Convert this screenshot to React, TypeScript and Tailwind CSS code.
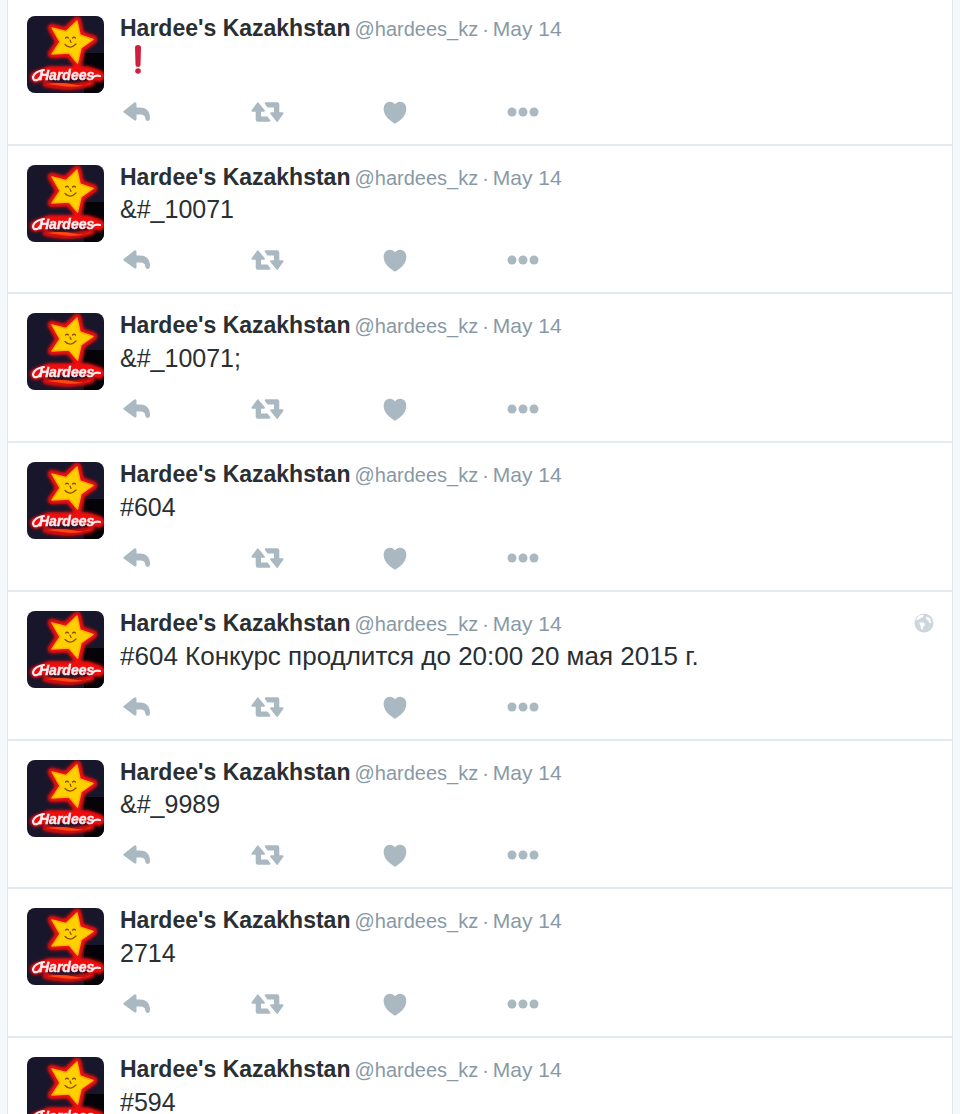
type Tweet = {
  id: number;
  text: string;
  alert?: boolean;
  located?: boolean;
  short?: boolean;
};

const tweets: Tweet[] = [
  { id: 1, text: "", alert: true },
  { id: 2, text: "&#_10071", short: true },
  { id: 3, text: "&#_10071;" },
  { id: 4, text: "#604" },
  { id: 5, text: "#604 Конкурс продлится до 20:00 20 мая 2015 г.", located: true },
  { id: 6, text: "&#_9989", short: true },
  { id: 7, text: "2714" },
  { id: 8, text: "#594" },
];

const STAR =
  "M50 5 L53 19 L66 23.500 L54 32 L50.500 47 L42 37 L25 38 L33 26 L25 12 L39 15.500 Z";

function Avatar({ id }: { id: number }) {
  const glow = `glow-${id}`;
  const soft = `soft-${id}`;
  return (
    <svg viewBox="0 0 77 77" className="block size-[77px] rounded-lg" aria-hidden="true">
      <defs>
        <filter id={glow} x="-30%" y="-30%" width="160%" height="160%">
          <feGaussianBlur stdDeviation="1.8" />
        </filter>
        <filter id={soft} x="-10%" y="-10%" width="120%" height="120%">
          <feGaussianBlur stdDeviation="0.5" />
        </filter>
      </defs>
      <rect width="77" height="77" fill="#17162b" />
      <path d="M57 37 H77 V77 H57 Z" fill="#050307" />
      <g filter={`url(#${glow})`} strokeLinejoin="round" strokeLinecap="round">
        <path d={STAR} fill="#f00d08" stroke="#f00d08" strokeWidth="9" />
        <path d="M9 61 L22 56 H60 L72 60" fill="none" stroke="#f2080c" strokeWidth="12" />
        <path d="M19 68 Q40 74 64 67" fill="none" stroke="#d80a08" strokeWidth="7" />
      </g>
      <g filter={`url(#${soft})`}>
        <path d={STAR} fill="#ffd000" stroke="#ffb000" strokeWidth="1.5" strokeLinejoin="round" />
        <path
          d="M38.500 22 q1.500 -1.500 3 0 M45.500 22 q1.500 -1.500 3 0 M43 24 l1 2.500 M38 28.500 Q43 34 49 28"
          fill="none"
          stroke="#8f4a00"
          strokeWidth="1.2"
          strokeLinecap="round"
        />
        <path d="M20 68 Q34 66 47 68.500 T64 67 Q52 72 39 70.500 Z" fill="#ff4a10" />
        <path
          d="M17 54 Q8 55 6 61 Q6 65 10 64 Q13 63 15 58 M66 61 Q69 59 73 60"
          fill="none"
          stroke="#f6edf0"
          strokeWidth="2.2"
          strokeLinecap="round"
        />
        <text
          x="12"
          y="64"
          fill="#f6edf0"
          stroke="#f6edf0"
          strokeWidth="0.4"
          className="font-['Liberation_Sans',sans-serif] text-[14px] font-bold italic"
        >
          Hardees
        </text>
      </g>
    </svg>
  );
}

function ReplyIcon() {
  return (
    <svg viewBox="0 0 28 20" className="h-5 w-7" fill="currentColor" aria-hidden="true">
      <path d="M.7 9 L11 .8 Q13.500 -.6 13.500 2 V5.500 H17 C24 5.500 27 10 27 16 C27 20 22.500 19.500 22.300 16.500 C22 13.500 20.500 12.500 17.500 12.500 H13.500 V17 Q13.500 19.500 11 18 L.7 10.500 Q0 9.700 .7 9 Z" />
    </svg>
  );
}

function RetweetIcon() {
  return (
    <svg viewBox="0 0 33 22" className="h-[22px] w-[33px]" fill="currentColor" aria-hidden="true">
      <path d="M7.300 1.400 L13.800 9.300 Q14.300 10.700 12.800 10.700 H10 V15.500 H16.500 L19.500 19.500 Q19.500 20.700 18 20.700 H7 Q4.700 20.700 4.700 18.500 V10.700 H1.500 Q0 10.700 .6 9.300 L6.300 1.400 Q6.800 .9 7.300 1.400 Z" />
      <path d="M25.700 20.700 L19.200 12.800 Q18.700 11.300 20.200 11.300 H23 V6.500 H16.500 L13.700 2.700 Q13.700 1.300 15 1.300 H26 Q28.300 1.300 28.300 3.500 V11.300 H31.500 Q33 11.300 32.400 12.800 L26.700 20.700 Q26.200 21.200 25.700 20.700 Z" />
    </svg>
  );
}

function HeartIcon() {
  return (
    <svg viewBox="0 0 24 23" className="h-[23px] w-6" fill="currentColor" aria-hidden="true">
      <path d="M12 3.600 C14 .3 18 .1 20.800 2 C24 4.500 24 9.500 21.700 14 C19.500 18 15.500 20.700 12 22.700 C8.500 20.700 4.500 18 2.300 14 C0 9.500 0 4.500 3.200 2 C6 .1 10 .3 12 3.600 Z" />
    </svg>
  );
}

function MoreIcon() {
  return (
    <svg viewBox="0 0 32 10" className="h-[10px] w-8" fill="currentColor" aria-hidden="true">
      <circle cx="5" cy="5" r="4.500" />
      <circle cx="16" cy="5" r="4.500" />
      <circle cx="27" cy="5" r="4.500" />
    </svg>
  );
}

function GlobeIcon() {
  return (
    <svg viewBox="0 0 20 20" className="size-5" role="img" aria-label="Location">
      <circle cx="10" cy="10" r="9.500" fill="#ccd6dd" />
      <path
        d="M2 6.500 L5 2.500 L10 1.500 L9 4 L6 5.500 L4 7 Z M12 3.500 L16 5 L17.500 10 L15.500 10 L14 7.500 L12 6 Z M5 9.500 L10 9.500 L11 12 L9 14 L8.500 17 L7 16 L6.500 12.500 Z"
        fill="#fff"
      />
    </svg>
  );
}

function ExclamationMark() {
  return (
    <svg viewBox="0 0 36 34" className="block h-[34px] w-9" role="img" aria-label="Exclamation mark">
      <path d="M15 3.500 Q15 1 18 1 Q21 1 21 3.500 L20.500 21 Q20.500 23 18 23 Q15.500 23 15.500 21 Z" fill="#cf1f3d" />
      <circle cx="18" cy="27" r="2.800" fill="#cf1f3d" />
    </svg>
  );
}

function TweetRow({ tweet }: { tweet: Tweet }) {
  return (
    <li className="flex gap-4 border-b-2 border-[#e4ebf0] pt-[19px] pr-[18px] pb-5 pl-[19px]">
      <a href="#profile" aria-label="Hardee's Kazakhstan profile" className="h-[77px] shrink-0">
        <Avatar id={tweet.id} />
      </a>
      <article className="min-w-0 flex-1">
        <header className="flex h-6 items-center justify-between">
          <div className="flex items-baseline gap-1 leading-6 whitespace-nowrap text-[#8899a6]">
            <a href="#profile" className="text-[23px] font-bold text-[#292f33]">
              Hardee's Kazakhstan
            </a>
            <span className="text-[20px]">@hardees_kz</span>
            <span className="text-[20px]">·</span>
            <a href="#status" className="text-[21px]">
              May 14
            </a>
          </div>
          {tweet.located && <GlobeIcon />}
        </header>
        <div
          className={`mt-1 text-[#292f33] ${tweet.short ? "leading-[33px]" : "leading-[34px]"} ${tweet.located ? "text-[26px]" : "text-[25px]"}`}
        >
          {tweet.alert ? <ExclamationMark /> : <p>{tweet.text}</p>}
        </div>
        <footer className="mt-[22px] flex h-6 items-center pl-[3px] text-[#aab8c2]">
          <div className="flex w-32">
            <button type="button" aria-label="Reply">
              <ReplyIcon />
            </button>
          </div>
          <div className="flex w-[132px]">
            <button type="button" aria-label="Retweet">
              <RetweetIcon />
            </button>
          </div>
          <div className="flex w-[124px]">
            <button type="button" aria-label="Like">
              <HeartIcon />
            </button>
          </div>
          <button type="button" aria-label="More">
            <MoreIcon />
          </button>
        </footer>
      </article>
    </li>
  );
}

export default function App() {
  return (
    <main className="h-screen overflow-hidden bg-[#f5f8fa] px-[7px] font-['Liberation_Sans',Arial,sans-serif]">
      <ol className="-mt-[3px] border-x border-[#e1e8ed] bg-white">
        {tweets.map((tweet) => (
          <TweetRow key={tweet.id} tweet={tweet} />
        ))}
      </ol>
    </main>
  );
}
